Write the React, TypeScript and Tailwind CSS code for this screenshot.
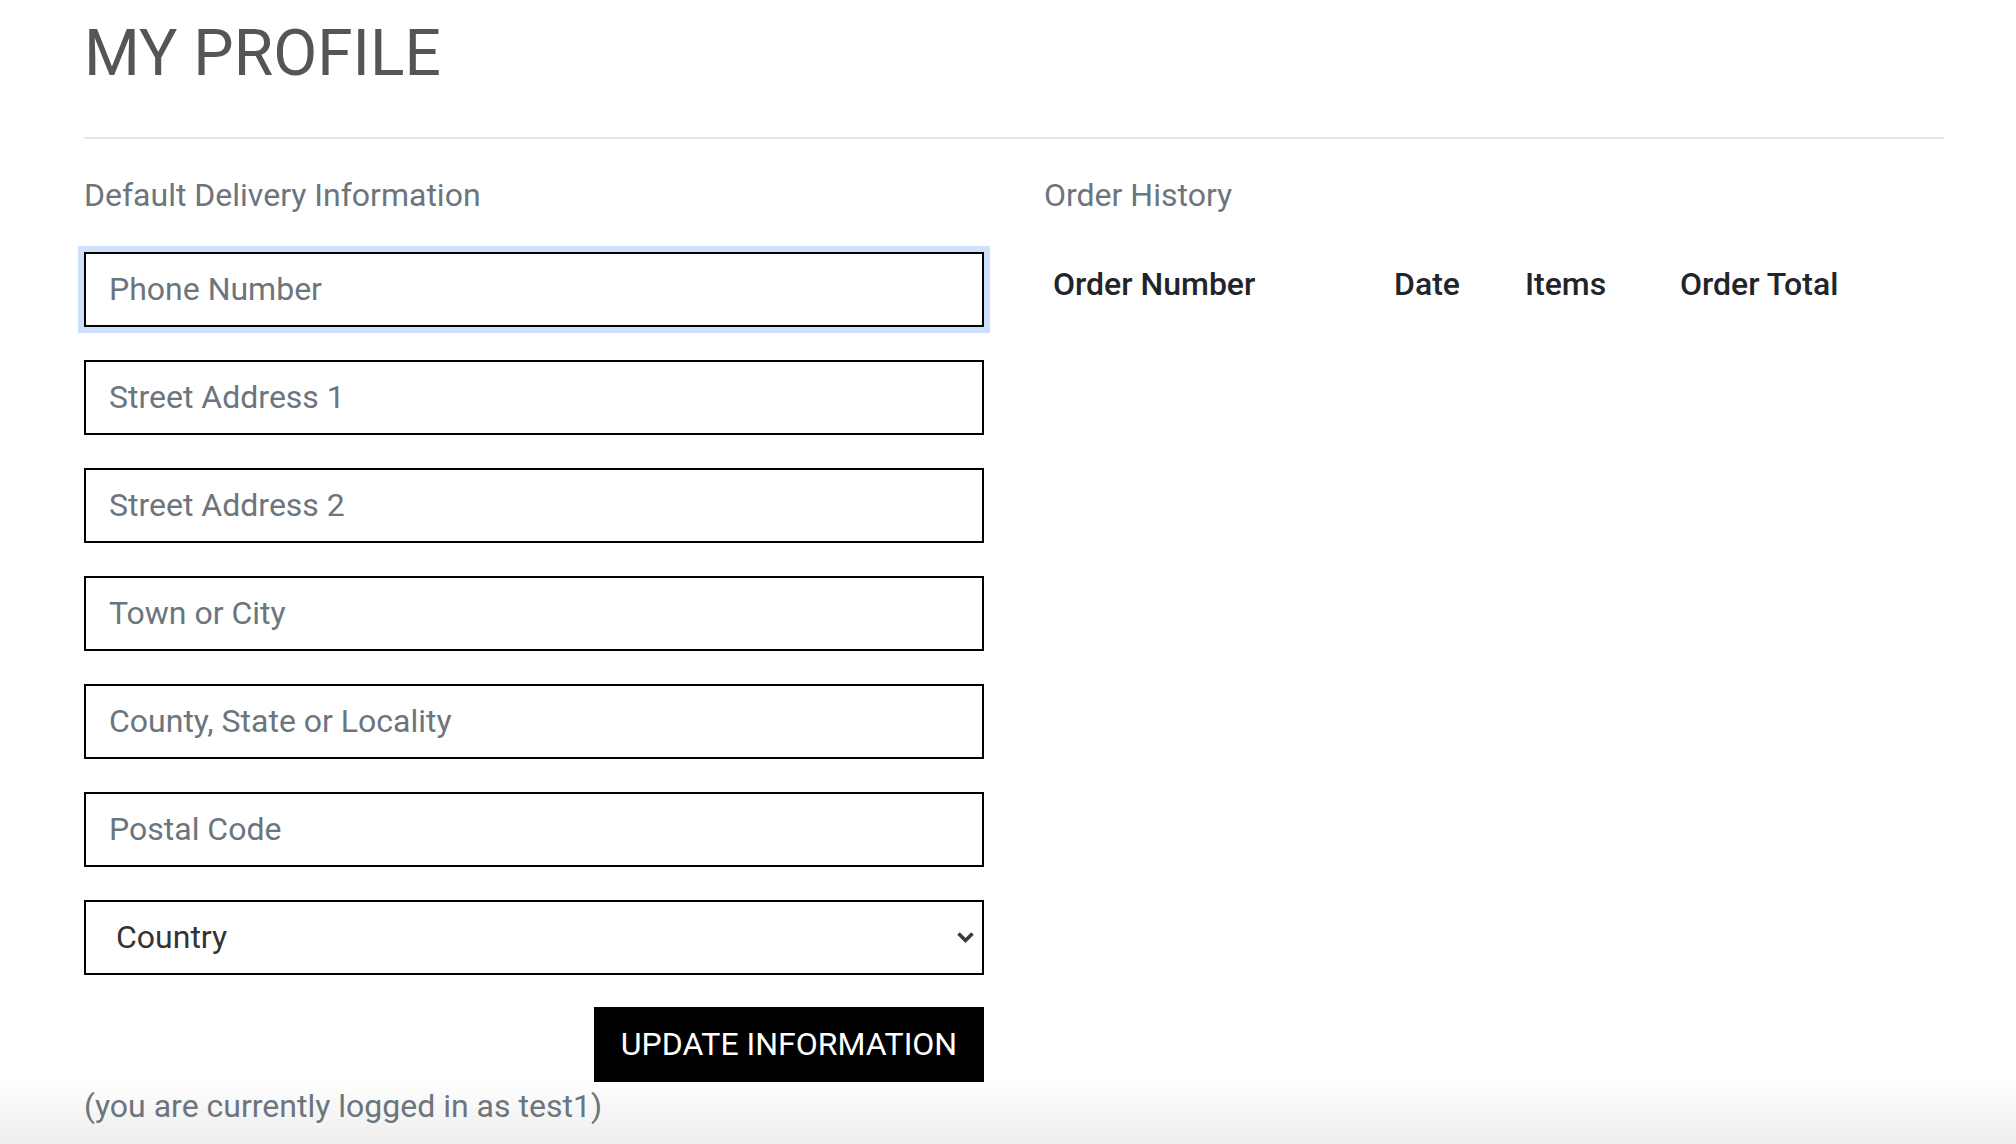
import React from 'react';

const fields = [
  'Phone Number',
  'Street Address 1',
  'Street Address 2',
  'Town or City',
  'County, State or Locality',
  'Postal Code',
];

const inputClass =
  'block h-[75px] w-full border-[2.5px] border-black bg-white pl-[23px] text-[32px] text-[#495057] outline-none placeholder:text-[#6c757d]';

const App: React.FC = () => {
  return (
    <div className="min-h-screen bg-[linear-gradient(to_bottom,#ffffff_1080px,#ededed_1144px)] font-['Roboto','Liberation_Sans',sans-serif]">
      <div className="ml-[84px] w-[1860px]">
        <h1 className="pt-[16px] text-[64px] leading-[1.2] font-normal text-[#555555]">
          MY PROFILE
        </h1>
        <hr className="mt-[44px] border-0 border-t-2 border-[#e6e6e6]" />

        <div className="grid grid-cols-2 gap-[60px] pt-[32px]">
          {/* delivery details */}
          <div>
            <h2 className="text-[32px] leading-[48px] text-[#6c757d]">
              Default Delivery Information
            </h2>
            <form className="mt-[33px] flex flex-col gap-[33px]">
              {fields.map((f, i) => (
                <input
                  key={f}
                  placeholder={f}
                  className={
                    i === 0
                      ? inputClass + ' shadow-[0_0_0_6px_#cfe0fc]'
                      : inputClass
                  }
                />
              ))}
              <div className="relative">
                <select
                  defaultValue=""
                  className="block h-[75px] w-full appearance-none border-[2.5px] border-black bg-white pl-[30px] text-[32px] text-[#333333] outline-none"
                >
                  <option value="">Country</option>
                </select>
                <svg
                  className="pointer-events-none absolute top-[31px] right-[9px]"
                  width="19"
                  height="13"
                  viewBox="0 0 19 13"
                >
                  <path
                    d="M2.5 2.5 L9.5 9.5 L16.5 2.5"
                    fill="none"
                    stroke="#3a3a3a"
                    strokeWidth="3.6"
                  />
                </svg>
              </div>
              <div className="-mt-[1px] flex justify-end">
                <button
                  type="button"
                  className="h-[75px] w-[390px] bg-black text-[32px] text-white"
                >
                  UPDATE INFORMATION
                </button>
              </div>
            </form>
            <p className="pt-[5px] text-[32px] leading-[1.2] text-[#6c757d]">
              (you are currently logged in as test1)
            </p>
          </div>

          {/* order history */}
          <div>
            <h2 className="text-[32px] leading-[48px] text-[#6c757d]">
              Order History
            </h2>
            <div className="mt-[41px] flex text-[32px] leading-[48px] font-medium text-[#212529]">
              <div className="w-[341px] pl-[9px]">Order Number</div>
              <div className="w-[131px] pl-[9px]">Date</div>
              <div className="w-[155px] pl-[9px]">Items</div>
              <div className="pl-[9px]">Order Total</div>
            </div>
          </div>
        </div>
      </div>
    </div>
  );
};

export default App;
